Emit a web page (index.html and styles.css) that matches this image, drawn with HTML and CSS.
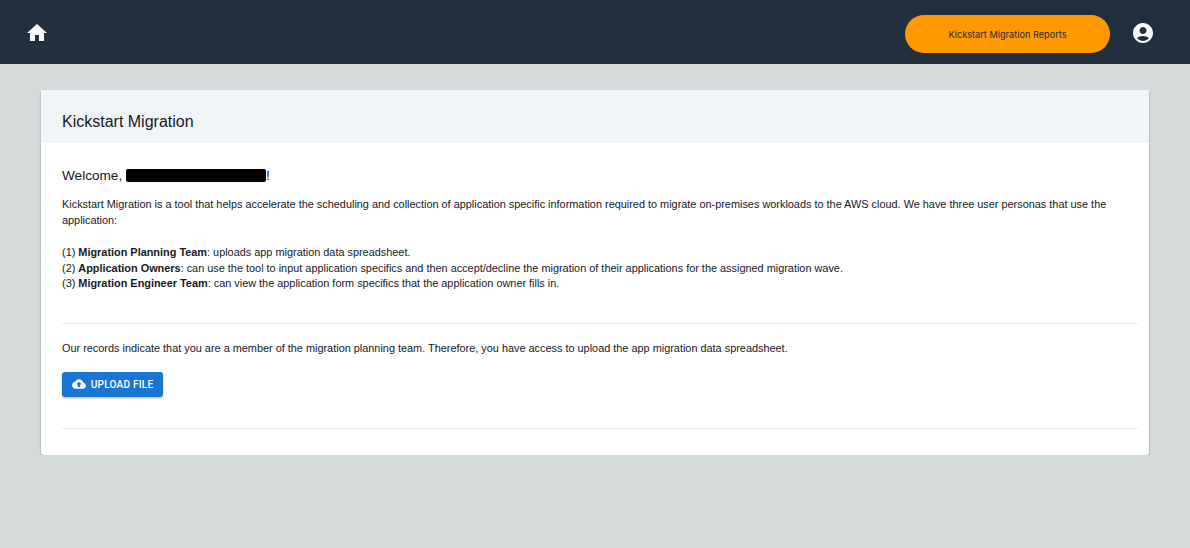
FILE: index.html
```html
<!DOCTYPE html>
<html lang="en">
<head>
    <meta charset="UTF-8">
    <meta name="viewport" content="width=device-width, initial-scale=1.0">
    <link rel="stylesheet" href="styles.css">
    <title>Kickstart Migration</title>
</head>
<body>
    <header class="topbar">
        <svg class="home-icon" viewBox="0 0 24 24" width="24" height="24"><path d="M10 20v-6h4v6h5v-8h3L12 3 2 12h3v8z"/></svg>
        <button type="button" class="reports-button">Kickstart Migration Reports</button>
        <svg class="account-icon" viewBox="0 0 24 24" width="24" height="24"><path d="M12 2C6.48 2 2 6.48 2 12s4.48 10 10 10 10-4.48 10-10S17.52 2 12 2zm0 4c1.93 0 3.5 1.57 3.5 3.5S13.93 13 12 13s-3.5-1.57-3.5-3.5S10.07 6 12 6zm0 14c-2.03 0-4.43-.82-6.14-2.88C7.55 15.8 9.68 15 12 15s4.45.8 6.14 2.12C16.43 19.18 14.03 20 12 20z"/></svg>
    </header>

    <main class="card">
        <h1 class="card-title">Kickstart Migration</h1>
        <div class="card-body">
            <p class="welcome">Welcome, <span class="redacted"></span>!</p>
            <p class="intro">Kickstart Migration is a tool that helps accelerate the scheduling and collection of application specific information required to migrate on-premises workloads to the AWS cloud. We have three user personas that use the application:</p>
            <ul class="personas">
                <li>(1) <b>Migration Planning Team</b>: uploads app migration data spreadsheet.</li>
                <li>(2) <b>Application Owners</b>: can use the tool to input application specifics and then accept/decline the migration of their applications for the assigned migration wave.</li>
                <li>(3) <b>Migration Engineer Team</b>: can view the application form specifics that the application owner fills in.</li>
            </ul>
            <hr class="divider">
            <p class="member-note">Our records indicate that you are a member of the migration planning team. Therefore, you have access to upload the app migration data spreadsheet.</p>
            <button type="button" class="upload-button">
                <svg viewBox="0 0 24 24" width="14" height="14"><path d="M19.35 10.04C18.67 6.59 15.64 4 12 4 9.11 4 6.6 5.64 5.35 8.04 2.34 8.36 0 10.91 0 14c0 3.31 2.69 6 6 6h13c2.76 0 5-2.24 5-5 0-2.64-2.05-4.78-4.65-4.96zM14 13v4h-4v-4H7l5-5 5 5h-3z"/></svg>
                Upload File
            </button>
            <hr class="divider last">
        </div>
    </main>
</body>
</html>
```

FILE: styles.css
```css
body {
    font-family: "Liberation Sans", Arial, sans-serif;
    background-color: #d5dbdb;
    color: #16191f;
    margin: 0;
    padding: 0;
}

.topbar {
    height: 64px;
    box-sizing: border-box;
    background-color: #232f3e;
    display: flex;
    align-items: center;
    padding: 2px 35px 0 25px;
}

.home-icon {
    fill: #ffffff;
    margin-right: auto;
}

.account-icon {
    fill: #ffffff;
    margin-left: 21px;
}

.reports-button {
    width: 205px;
    height: 38px;
    margin-top: 2px;
    background-color: #ff9900;
    color: #232f3e;
    border: none;
    border-radius: 19px;
    font-family: Inter, sans-serif;
    font-size: 9.2px;
    padding: 0;
}

.card {
    margin: 26px 41px 0 41px;
    background: #ffffff;
    border-radius: 2px;
    box-shadow: 0 1px 2px rgba(0, 0, 0, 0.4);
}

.card-title {
    margin: 0;
    height: 53px;
    line-height: 64px;
    box-sizing: border-box;
    padding: 0 21px;
    background-color: #f2f5f8;
    font-size: 16px;
    font-weight: normal;
}

.card-body {
    padding: 24px 11px 26px 21px;
}

.welcome {
    margin: 0;
    font-size: 13.6px;
    line-height: 17px;
}

.redacted {
    display: inline-block;
    width: 140px;
    height: 13px;
    background: #000000;
    border-radius: 2px;
    vertical-align: -2px;
}

.intro {
    margin: 12px 0 0 0;
    font-size: 10.9px;
    line-height: 16px;
}

.personas {
    list-style: none;
    margin: 17px 0 0 0;
    padding: 0;
    font-size: 10.9px;
    line-height: 15.5px;
}

.divider {
    border: none;
    border-top: 1px solid #eaeded;
    margin: 31px 0 0 0;
}

.member-note {
    margin: 16px 0 0 0;
    font-size: 10.9px;
    line-height: 16px;
}

.upload-button {
    margin-top: 16px;
    width: 101px;
    height: 25px;
    background-color: #1976d2;
    color: #ffffff;
    border: none;
    border-radius: 3px;
    box-shadow: 0 1px 2px rgba(0, 0, 0, 0.3);
    font-family: Roboto, sans-serif;
    font-size: 10.1px;
    font-weight: 500;
    letter-spacing: 0.2px;
    text-transform: uppercase;
    display: flex;
    align-items: center;
    justify-content: center;
    gap: 5px;
    padding: 0;
}

.upload-button svg {
    fill: #ffffff;
}

.divider.last {
    margin-top: 31px;
}
```
